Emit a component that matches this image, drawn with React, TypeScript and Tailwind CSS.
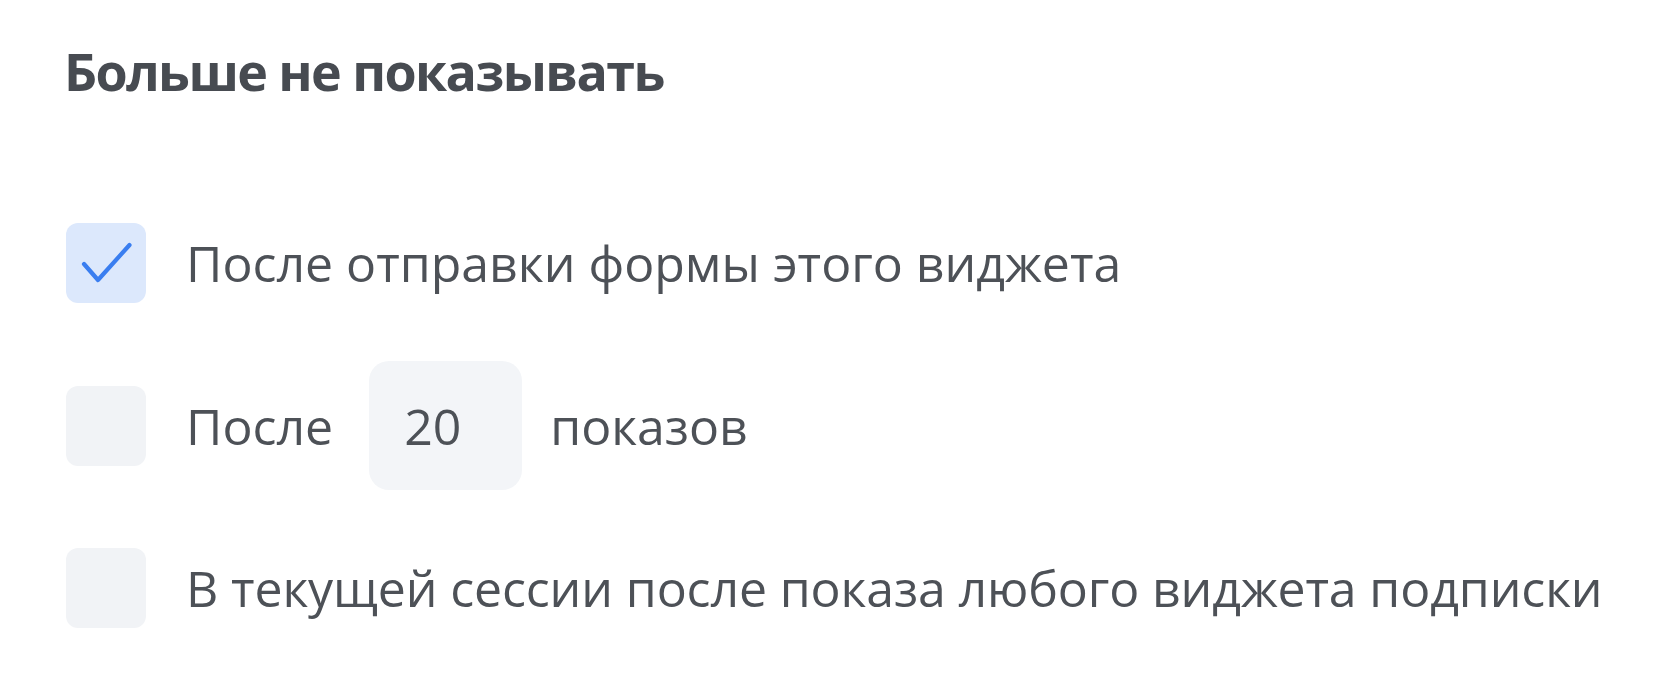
import React from 'react';

const Checkbox: React.FC<{ checked?: boolean }> = ({ checked }) => (
  <div
    className={
      'w-[80px] h-[80px] shrink-0 rounded-[12px] flex items-center justify-center ' +
      (checked ? 'bg-[#dce8fc]' : 'bg-[#f1f3f6]')
    }
  >
    {checked && (
      <svg width="80" height="80" viewBox="0 0 80 80" fill="none">
        <path d="M18 41 L32 57 L63.5 22" stroke="#3a7ef0" strokeWidth="4.2" strokeLinecap="round" strokeLinejoin="round" />
      </svg>
    )}
  </div>
);

export default function App() {
  return (
    <div className="min-h-[700px] bg-white font-['Open_Sans',sans-serif] text-[#4d5157] pl-[58px] pt-[39px]">
      <h2 className="ml-[6px] text-[52px] leading-[64px] font-bold tracking-[-1.6px] text-[#474b51]">Больше не показывать</h2>
      <div className="mt-[120px] ml-[8px] flex flex-col gap-[58px]">
        <div className="flex items-center gap-[40px]">
          <Checkbox checked />
          <span className="text-[50px] leading-[60px]">После отправки формы этого виджета</span>
        </div>
        <div className="flex items-center gap-[40px]">
          <Checkbox />
          <div className="flex items-center text-[50px] leading-[60px]">
            <span>После</span>
            <div className="ml-[36px] w-[153px] h-[129px] rounded-[20px] bg-[#f3f5f8] flex items-center pl-[35px]">20</div>
            <span className="ml-[28px]">показов</span>
          </div>
        </div>
        <div className="flex items-center gap-[40px]">
          <Checkbox />
          <span className="text-[50px] leading-[60px] tracking-[-0.13px]">В текущей сессии после показа любого виджета подписки</span>
        </div>
      </div>
    </div>
  );
}
